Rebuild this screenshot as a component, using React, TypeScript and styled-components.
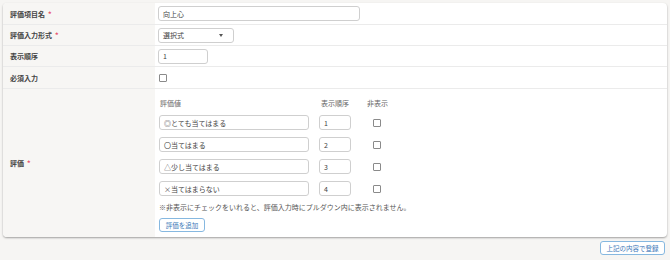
import React from "react";
import styled, { createGlobalStyle } from "styled-components";

const GlobalStyle = createGlobalStyle`
  html, body {
    margin: 0;
    padding: 0;
    background: #f6f5f3;
    font-family: "Noto Sans CJK JP", "Noto Sans", sans-serif;
    color: #333;
  }
`;

const Page = styled.div`
  width: 670px;
  height: 260px;
  padding: 3px;
  box-sizing: border-box;
`;

const Card = styled.div`
  background: #fff;
  border-radius: 4px;
  box-shadow: 0 1px 2px rgba(0, 0, 0, 0.35);
  overflow: hidden;
`;

const Row = styled.div<{ $h: number }>`
  display: grid;
  grid-template-columns: 152px 1fr;
  min-height: ${(p) => p.$h}px;
  border-top: 1px solid #ebebeb;
  &:first-child {
    border-top: none;
    min-height: ${(p) => p.$h + 1}px;
  }
`;

const Label = styled.div`
  background: #f7f6f4;
  display: flex;
  align-items: center;
  padding-left: 7px;
  font-size: 7px;
  font-weight: 700;
  color: #444;
`;

const Req = styled.span`
  color: #e8506b;
  margin-left: 3px;
`;

const Cell = styled.div<{ $pad?: string }>`
  display: flex;
  flex-direction: column;
  justify-content: center;
  padding: ${(p) => p.$pad ?? "0 3px"};
`;

const Input = styled.div<{ $w: number }>`
  width: ${(p) => p.$w}px;
  height: 15px;
  box-sizing: border-box;
  border: 1px solid #cfcfcf;
  border-radius: 3px;
  display: flex;
  align-items: center;
  padding: 0 4px;
  font-size: 7px;
  color: #444;
  background: #fff;
`;

const Select = styled(Input)`
  justify-content: space-between;
  padding-right: 10px;
`;

const Caret = styled.span`
  width: 0;
  height: 0;
  border-left: 2.5px solid transparent;
  border-right: 2.5px solid transparent;
  border-top: 3px solid #555;
`;

const Check = styled.div`
  width: 6px;
  height: 6px;
  border: 1px solid #8a8a8a;
  border-radius: 1px;
  background: #fff;
`;

const EvalGrid = styled.div`
  display: grid;
  grid-template-columns: 160px 48px 20px;
  row-gap: 7px;
  align-items: center;
`;

const Head = styled.div<{ $indent?: number }>`
  font-size: 7px;
  color: #666;
  height: 8px;
  line-height: 8px;
  margin-bottom: 1px;
  padding-left: ${(p) => p.$indent ?? 0}px;
  white-space: nowrap;
`;

const CheckCell = styled.div`
  display: flex;
  justify-content: center;
`;

const Note = styled.div`
  font-size: 7px;
  color: #555;
  margin-top: 6px;
`;

const ButtonRow = styled.div`
  margin-top: 6px;
  display: flex;
`;

const OutlineButton = styled.div<{ $w: number }>`
  width: ${(p) => p.$w}px;
  height: 14px;
  box-sizing: border-box;
  border: 1px solid #86b8e0;
  border-radius: 3px;
  display: flex;
  align-items: center;
  justify-content: center;
  font-size: 6.5px;
  color: #3b78b8;
  background: #fff;
`;

const Footer = styled.div`
  display: flex;
  justify-content: flex-end;
  padding: 4px 2px 0 0;
`;

const items = [
  { name: "◎とても当てはまる", order: "1" },
  { name: "〇当てはまる", order: "2" },
  { name: "△少し当てはまる", order: "3" },
  { name: "×当てはまらない", order: "4" },
];

export default function App() {
  return (
    <Page>
      <GlobalStyle />
      <Card>
        <Row $h={20}>
          <Label>
            評価項目名<Req>*</Req>
          </Label>
          <Cell>
            <Input $w={202}>向上心</Input>
          </Cell>
        </Row>
        <Row $h={20}>
          <Label>
            評価入力形式<Req>*</Req>
          </Label>
          <Cell>
            <Select $w={76}>
              選択式
              <Caret />
            </Select>
          </Cell>
        </Row>
        <Row $h={20}>
          <Label>表示順序</Label>
          <Cell>
            <Input $w={50}>1</Input>
          </Cell>
        </Row>
        <Row $h={21}>
          <Label>必須入力</Label>
          <Cell $pad="0 4px">
            <Check />
          </Cell>
        </Row>
        <Row $h={148}>
          <Label>
            評価<Req>*</Req>
          </Label>
          <Cell $pad="10px 4px 5px 4px">
            <EvalGrid>
              <Head $indent={1}>評価値</Head>
              <Head $indent={2}>表示順序</Head>
              <Head>非表示</Head>
              {items.map((it) => (
                <React.Fragment key={it.order}>
                  <Input $w={150}>{it.name}</Input>
                  <Input $w={32}>{it.order}</Input>
                  <CheckCell>
                    <Check />
                  </CheckCell>
                </React.Fragment>
              ))}
            </EvalGrid>
            <Note>
              ※非表示にチェックをいれると、評価入力時にプルダウン内に表示されません。
            </Note>
            <ButtonRow>
              <OutlineButton $w={46}>評価を追加</OutlineButton>
            </ButtonRow>
          </Cell>
        </Row>
      </Card>
      <Footer>
        <OutlineButton $w={65}>上記の内容で登録</OutlineButton>
      </Footer>
    </Page>
  );
}
